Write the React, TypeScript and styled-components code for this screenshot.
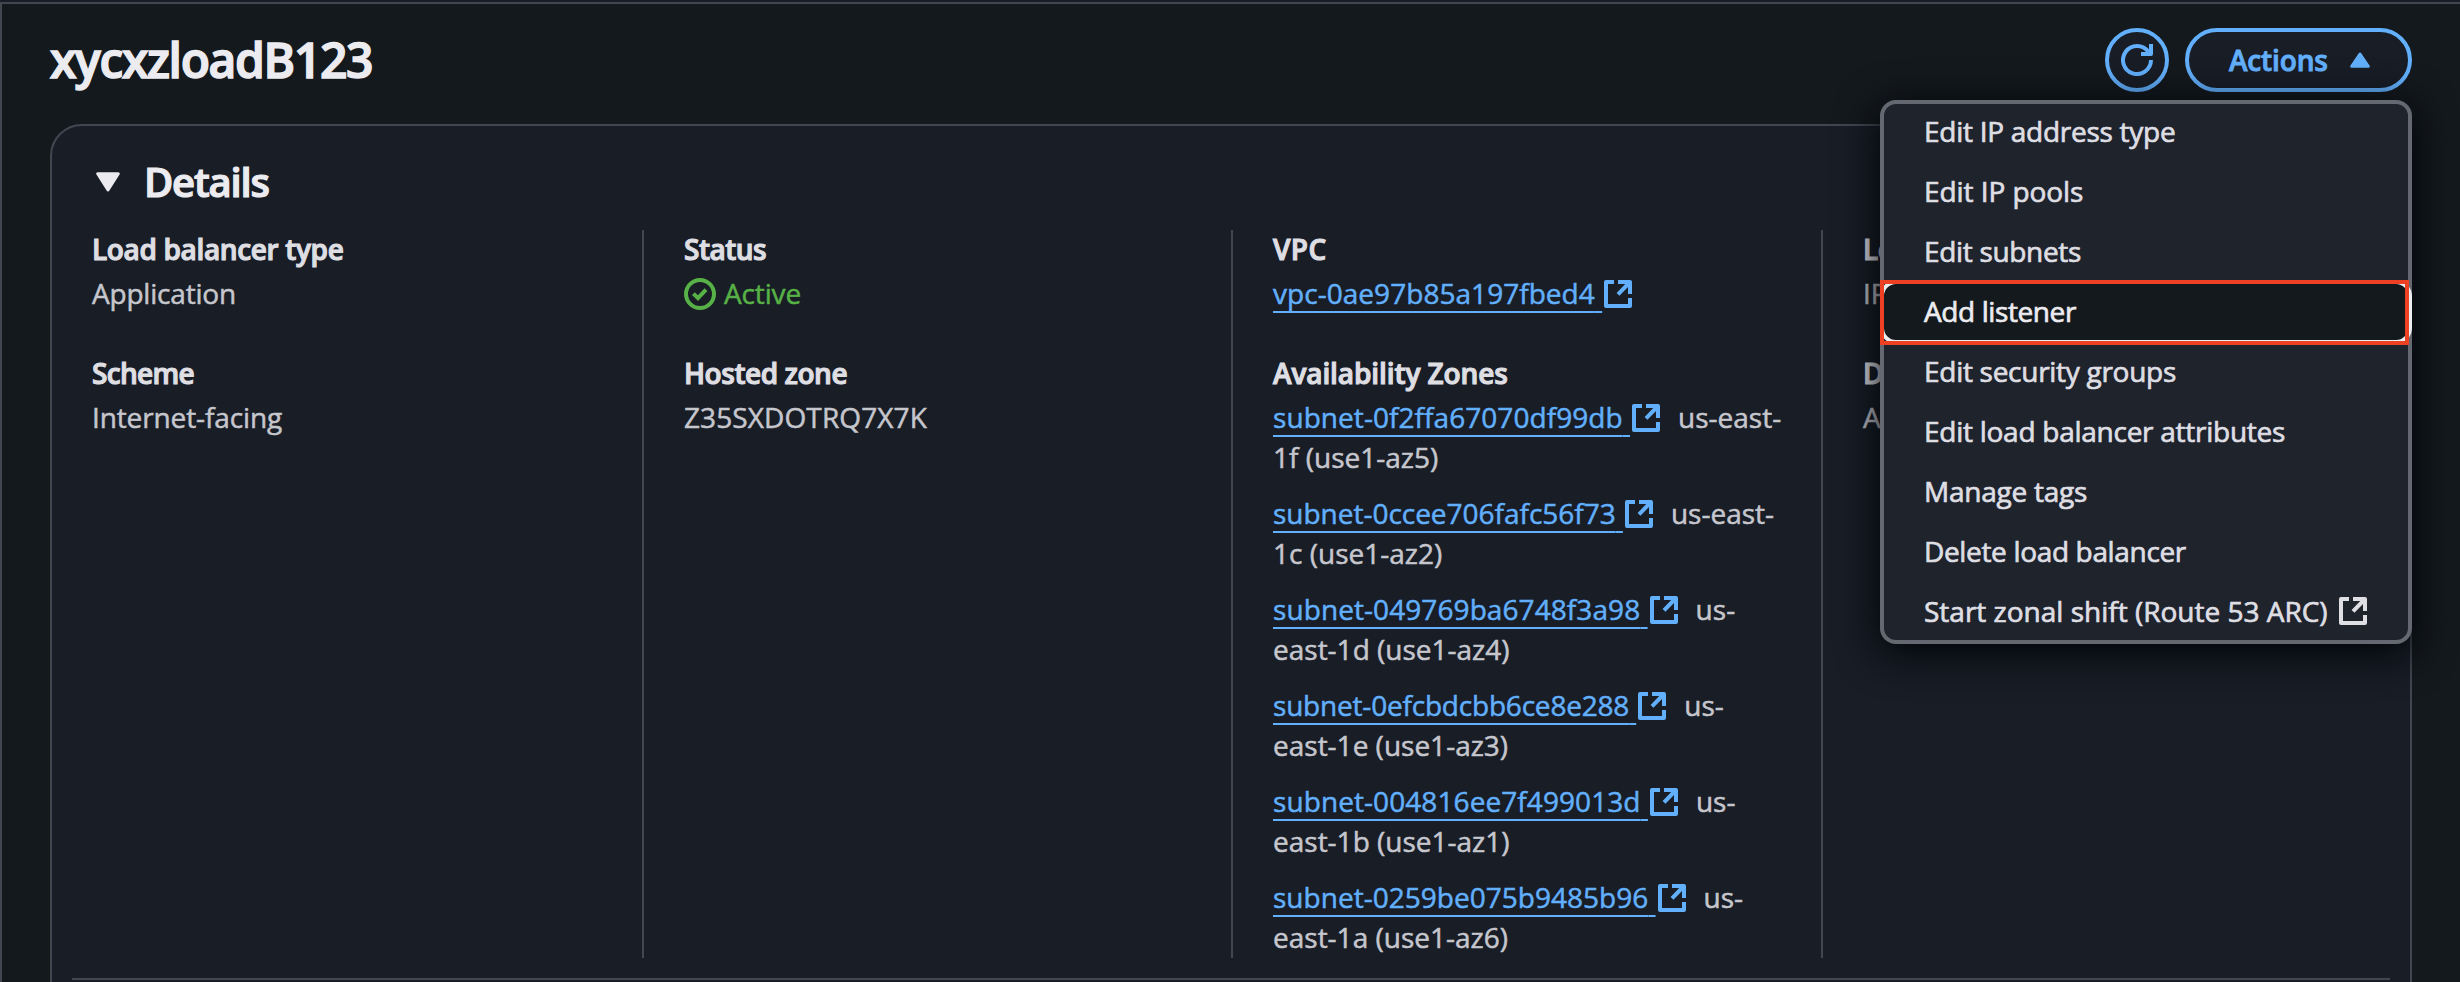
import React from "react";
import styled, { createGlobalStyle } from "styled-components";

const GlobalStyle = createGlobalStyle`
  *, *::before, *::after { box-sizing: border-box; }
  body {
    margin: 0;
    background: #181d26;
    color: #c6c6cd;
    font-family: "Open Sans", "Noto Sans", sans-serif;
    font-size: 28px;
    line-height: 40px;
    overflow: hidden;
    -webkit-text-stroke: 0.5px currentColor;
  }
  h1, h2, dl, dt, dd, ul { margin: 0; padding: 0; }
`;

const Page = styled.main`
  margin-top: 2px;
  height: 980px;
  padding: 24px 48px 0;
  border-top: 2px solid #424650;
  border-left: 2px solid #424650;
  background: #14191d;
  display: flex;
  flex-direction: column;
  gap: 32px;
  overflow: hidden;
`;
const Header = styled.header`
  height: 64px;
  flex: none;
  display: flex;
  align-items: center;
  justify-content: space-between;
`;
const Title = styled.h1`
  font-size: 48px;
  line-height: 60px;
  font-weight: 600;
  letter-spacing: -1.35px;
  color: #ebebf0;
  -webkit-text-stroke: 1.5px currentColor;
`;
const ActionBar = styled.div`
  position: relative;
  display: flex;
  gap: 16px;
`;
const RoundButton = styled.button`
  width: 64px;
  height: 64px;
  padding: 0;
  border: 4px solid #62affb;
  border-radius: 50%;
  background: #181d26;
  color: #62affb;
  display: flex;
  align-items: center;
  justify-content: center;
`;
const ActionsButton = styled.button`
  width: 227px;
  height: 64px;
  padding: 0 38px 0 40px;
  border: 4px solid #62affb;
  border-radius: 32px;
  background: #181d26;
  color: #62affb;
  font: 600 28px/40px "Open Sans", "Noto Sans", sans-serif;
  letter-spacing: -0.15px;
  -webkit-text-stroke: 0.9px currentColor;
  display: flex;
  align-items: center;
  justify-content: space-between;
`;
const ActionsLabel = styled.span`
  padding-bottom: 1px;
`;
const Menu = styled.ul`
  position: absolute;
  top: 72px;
  right: 0;
  width: 532px;
  height: 544px;
  border-radius: 16px;
  background: #1e232c;
  list-style: none;
  box-shadow: inset 0 0 0 4px #656871, 0 8px 40px 2px #000408;
  z-index: 2;
`;
const MenuItem = styled.li<{ $track: number; $active?: boolean }>`
  position: relative;
  display: flex;
  align-items: center;
  gap: 9px;
  height: 64px;
  margin-bottom: -4px;
  padding: 0 0 2px 40px;
  border: 4px solid ${(p) => (p.$active ? "#ebebf0" : "transparent")};
  border-radius: 16px;
  background: ${(p) => (p.$active ? "#14191d" : "transparent")};
  color: ${(p) => (p.$active ? "#ebebf0" : "#dedee3")};
  letter-spacing: ${(p) => p.$track}px;
  white-space: nowrap;
  -webkit-text-stroke: 0.7px currentColor;
`;
const Highlight = styled.span`
  position: absolute;
  inset: -4px -1px -5px -4px;
  border: 4px solid #ee4023;
`;
const Card = styled.section`
  flex: none;
  width: 2362px;
  height: 900px;
  padding: 32px 20px 0;
  border: 2px solid #424650;
  border-radius: 32px 32px 0 0;
  background: #181d26;
`;
const CardHeader = styled.div`
  display: flex;
  align-items: center;
  gap: 24px;
  height: 48px;
  margin-bottom: 24px;
  padding-left: 24px;
  color: #ebebf0;
`;
const CardTitle = styled.h2`
  font-size: 40px;
  line-height: 48px;
  font-weight: 600;
  letter-spacing: -1.2px;
  -webkit-text-stroke: 1.2px currentColor;
`;
const Columns = styled.div`
  display: grid;
  grid-template-columns: 570px 589px 590px 1fr;
  height: 728px;
  margin-bottom: 20px;
`;
const Field = styled.div`
  display: flex;
  flex-direction: column;
  gap: 4px;
`;
const Column = styled.dl`
  display: flex;
  flex-direction: column;
  gap: 40px;
  padding-left: 40px;
  border-left: 2px solid #424650;
  white-space: nowrap;
  &:first-child {
    padding-left: 20px;
    border-left: 0;
  }
  ${Field}:first-child {
    margin-top: -1px;
  }
`;
const Label = styled.dt<{ $track?: number }>`
  font-weight: 600;
  letter-spacing: ${(p) => p.$track ?? -0.35}px;
  color: #dedee3;
  -webkit-text-stroke: 1.1px currentColor;
`;
const Value = styled.dd<{ $track?: number }>`
  display: flex;
  flex-direction: column;
  gap: 16px;
  letter-spacing: ${(p) => p.$track ?? 0}px;
`;
const Status = styled.span`
  display: flex;
  align-items: center;
  gap: 8px;
  letter-spacing: -0.15px;
  color: #57b146;
  svg {
    margin-top: 2px;
  }
`;
const Link = styled.a`
  color: #62affb;
`;
const LinkText = styled.span<{ $track?: number }>`
  letter-spacing: ${(p) => p.$track ?? 0}px;
  text-decoration: underline 2px;
  text-underline-offset: 7px;
  text-decoration-skip-ink: none;
`;
const Zone = styled.span`
  margin-left: 16px;
`;
const Icon = styled.svg`
  flex: none;
  fill: none;
  stroke: currentColor;
  stroke-width: 2;
  stroke-linejoin: round;
  vertical-align: -6px;
`;
const Triangle = styled.svg`
  flex: none;
  fill: currentColor;
  stroke: currentColor;
  stroke-width: 3;
  stroke-linejoin: round;
`;
const Divider = styled.div`
  height: 2px;
  background: #424650;
`;

const ExternalIcon = () => (
  <Icon width="32" height="32" viewBox="0 0 16 16" aria-hidden>
    <path d="M6 2H2v12h12v-4" />
    <path d="M8 2h6v6M14 2 8 8.2" />
  </Icon>
);
const ExternalLink = ({ text, track }: { text: string; track?: number }) => (
  <Link>
    <LinkText $track={track}>{text}&nbsp;</LinkText>
    <ExternalIcon />
  </Link>
);

const subnets = [
  { id: "subnet-0f2ffa67070df99db", track: 0.06, head: "us-east-", tail: "1f (use1-az5)" },
  { id: "subnet-0ccee706fafc56f73", track: -0.02, head: "us-east-", tail: "1c (use1-az2)" },
  { id: "subnet-049769ba6748f3a98", track: 0.08, head: "us-", tail: "east-1d (use1-az4)" },
  { id: "subnet-0efcbdcbb6ce8e288", track: -0.2, head: "us-", tail: "east-1e (use1-az3)" },
  { id: "subnet-004816ee7f499013d", track: 0.08, head: "us-", tail: "east-1b (use1-az1)" },
  { id: "subnet-0259be075b9485b96", track: 0.02, head: "us-", tail: "east-1a (use1-az6)" },
];
const actions: { text: string; track: number; active?: boolean; external?: boolean }[] = [
  { text: "Edit IP address type", track: -0.27 },
  { text: "Edit IP pools", track: -0.07 },
  { text: "Edit subnets", track: -0.32 },
  { text: "Add listener", track: -0.4, active: true },
  { text: "Edit security groups", track: -0.28 },
  { text: "Edit load balancer attributes", track: -0.26 },
  { text: "Manage tags", track: -0.24 },
  { text: "Delete load balancer", track: -0.34 },
  { text: "Start zonal shift (Route 53 ARC)", track: 0, external: true },
];

export default function App() {
  return (
    <>
      <GlobalStyle />
      <Page>
        <Header>
          <Title>xycxzloadB123</Title>
          <ActionBar>
            <RoundButton aria-label="Refresh">
              <Icon width="32" height="32" viewBox="0 0 16 16">
                <path d="M15 8a7 7 0 1 1-1.3-4.05" />
                <path d="M10 5h5V0" />
              </Icon>
            </RoundButton>
            <ActionsButton>
              <ActionsLabel>Actions</ActionsLabel>
              <Triangle width="20" height="16" viewBox="0 0 20 16" aria-hidden>
                <path d="M10 2 18.3 14.3H1.7Z" />
              </Triangle>
            </ActionsButton>
            <Menu>
              {actions.map((a) => (
                <MenuItem key={a.text} $track={a.track} $active={a.active}>
                  {a.text}
                  {a.external && <ExternalIcon />}
                  {a.active && <Highlight />}
                </MenuItem>
              ))}
            </Menu>
          </ActionBar>
        </Header>
        <Card>
          <CardHeader>
            <Triangle width="24" height="20" viewBox="0 0 24 20" aria-hidden>
              <path d="M1.7 1.7H22.3L12 18Z" />
            </Triangle>
            <CardTitle>Details</CardTitle>
          </CardHeader>
          <Columns>
            <Column>
              <Field>
                <Label>Load balancer type</Label>
                <Value $track={-0.2}>Application</Value>
              </Field>
              <Field>
                <Label $track={-0.7}>Scheme</Label>
                <Value $track={-0.12}>Internet-facing</Value>
              </Field>
            </Column>
            <Column>
              <Field>
                <Label $track={-0.5}>Status</Label>
                <Value>
                  <Status>
                    <Icon width="32" height="32" viewBox="0 0 16 16" aria-hidden>
                      <circle cx="8" cy="8" r="7" />
                      <path d="m4.7 7.8 2.3 2.3 4-4.3" strokeLinejoin="miter" />
                    </Icon>
                    Active
                  </Status>
                </Value>
              </Field>
              <Field>
                <Label $track={-0.45}>Hosted zone</Label>
                <Value $track={0.1}>Z35SXDOTRQ7X7K</Value>
              </Field>
            </Column>
            <Column>
              <Field>
                <Label $track={0.4}>VPC</Label>
                <Value>
                  <div>
                    <ExternalLink text="vpc-0ae97b85a197fbed4" track={0.04} />
                  </div>
                </Value>
              </Field>
              <Field>
                <Label $track={-0.1}>Availability Zones</Label>
                <Value>
                  {subnets.map((s) => (
                    <div key={s.id}>
                      <ExternalLink text={s.id} track={s.track} />
                      <Zone>{s.head}</Zone>
                      <br />
                      {s.tail}
                    </div>
                  ))}
                </Value>
              </Field>
            </Column>
            <Column>
              <Field>
                <Label>Load balancer IP address type</Label>
                <Value>IPv4</Value>
              </Field>
              <Field>
                <Label>DNS name</Label>
                <Value>A Record</Value>
              </Field>
            </Column>
          </Columns>
          <Divider />
        </Card>
      </Page>
    </>
  );
}
